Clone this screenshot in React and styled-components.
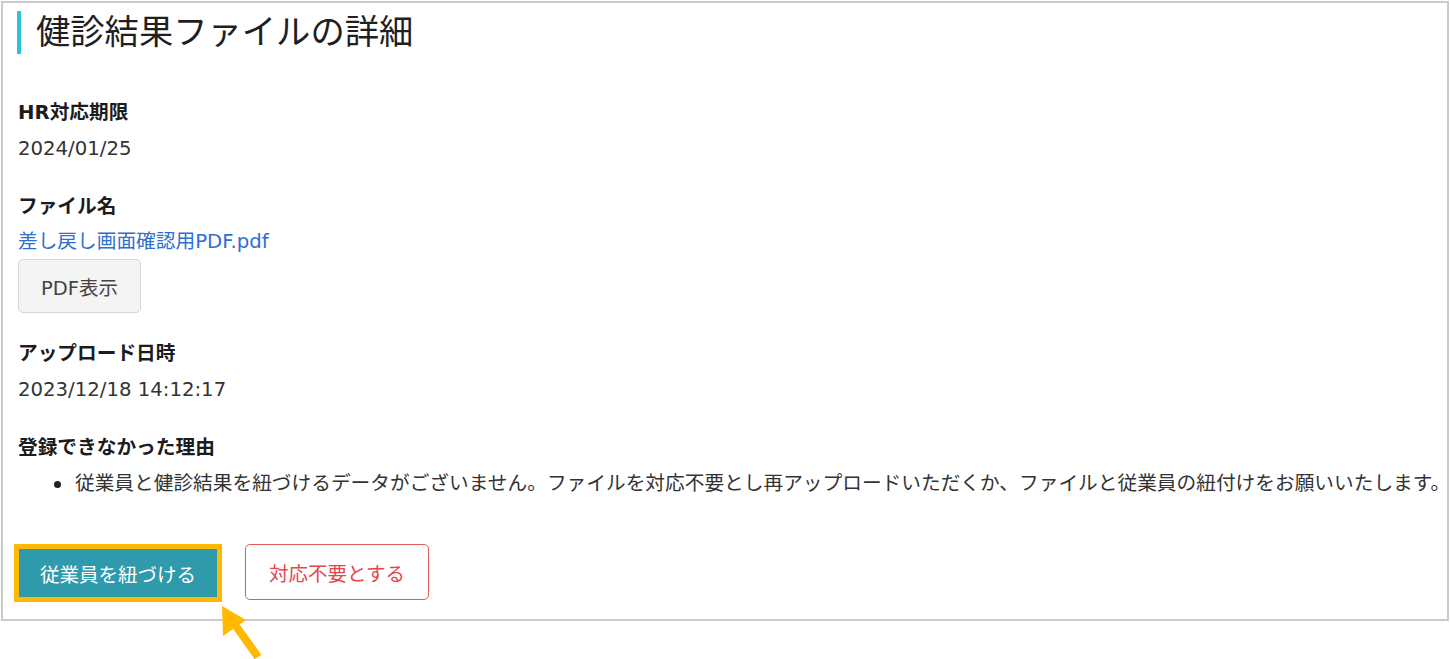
import React from "react";
import styled, { createGlobalStyle } from "styled-components";

const Global = createGlobalStyle`
  html, body { margin: 0; padding: 0; background: #ffffff; }
  html, body, #root { min-height: 100%; height: 100%; }
  body {
    font-family: "DejaVu Sans", "Noto Sans CJK JP", sans-serif;
    color: #333333;
  }
  * { box-sizing: border-box; }
`;

const Page = styled.main`
  min-height: 659px;
  padding: 1px 1px 0 1px;
`;

const Panel = styled.section`
  border: 2px solid #cbcbcb;
  background: #ffffff;
  padding: 0 2px 17px 15px;
  display: flex;
  flex-direction: column;
`;

const Title = styled.h1`
  margin: 8px 0 0 -1px;
  padding: 0 0 6px 15px;
  border-left: 4px solid #2ec1d9;
  font-family: "Noto Sans CJK JP", sans-serif;
  font-weight: 400;
  font-size: 34.3px;
  line-height: 37px;
  color: #1f1f1f;
`;

const Field = styled.div`
  margin-top: ${(p) => p.$top}px;
  display: flex;
  flex-direction: column;
  align-items: flex-start;
`;

const Label = styled.div`
  font-size: 19.7px;
  font-weight: 700;
  line-height: 36px;
  color: #1c1c1c;
`;

const Value = styled.div`
  font-size: 19.7px;
  line-height: 36px;
  color: #333333;
  white-space: nowrap;
`;

const FileLink = styled.a`
  font-size: 19.7px;
  line-height: 34px;
  color: #2f6fd0;
  text-decoration: none;
`;

const GrayButton = styled.button`
  font-family: inherit;
  height: 54px;
  padding: 0 22px;
  font-size: 19.5px;
  color: #444444;
  background: #f4f4f4;
  border: 1px solid #d6d6d6;
  border-radius: 5px;
  cursor: pointer;
`;

const List = styled.ul`
  margin: 0;
  padding: 0 0 0 36px;
  list-style: none;
`;

const Item = styled.li`
  display: flex;
  align-items: center;
  gap: 14px;
  font-size: 19.7px;
  line-height: 36px;
  color: #333333;
  white-space: nowrap;
`;

const Dot = styled.span`
  width: 7px;
  height: 7px;
  border-radius: 50%;
  background: #222222;
  flex: none;
`;

const ButtonRow = styled.div`
  margin: 42px 0 0 -4px;
  display: flex;
  align-items: flex-start;
  gap: 23px;
`;

const Highlight = styled.div`
  position: relative;
  border: 5px solid #ffb900;
  display: flex;
`;

const PrimaryButton = styled.button`
  font-family: inherit;
  width: 198px;
  height: 48px;
  border: none;
  background: #2f9aac;
  color: #ffffff;
  font-size: 19.5px;
  cursor: pointer;
`;

const DangerButton = styled.button`
  font-family: inherit;
  width: 184px;
  height: 56px;
  background: #ffffff;
  border: 1px solid #e05a5c;
  border-radius: 5px;
  color: #e2474b;
  font-size: 19.5px;
  cursor: pointer;
`;

const Arrow = styled.svg`
  position: absolute;
  left: 199px;
  top: 53px;
  z-index: 5;
  overflow: visible;
`;

export default function App() {
  return (
    <>
      <Global />
      <Page>
        <Panel>
          <Title>健診結果ファイルの詳細</Title>

          <Field $top={41}>
            <Label>HR対応期限</Label>
            <Value>2024/01/25</Value>
          </Field>

          <Field $top={22}>
            <Label>ファイル名</Label>
            <FileLink href="#">差し戻し画面確認用PDF.pdf</FileLink>
            <GrayButton>PDF表示</GrayButton>
          </Field>

          <Field $top={23}>
            <Label>アップロード日時</Label>
            <Value>2023/12/18 14:12:17</Value>
          </Field>

          <Field $top={22}>
            <Label>登録できなかった理由</Label>
            <List>
              <Item>
                <Dot />
                従業員と健診結果を紐づけるデータがございません。ファイルを対応不要とし再アップロードいただくか、ファイルと従業員の紐付けをお願いいたします。
              </Item>
            </List>
          </Field>

          <ButtonRow>
            <Highlight>
              <PrimaryButton>従業員を紐づける</PrimaryButton>
              <Arrow width="44" height="58" viewBox="0 0 44 58">
                <line x1="15" y1="20" x2="40" y2="55" stroke="#ffb900" strokeWidth="8" />
                <polygon points="4,4 5,34 28,18" fill="#ffb900" />
              </Arrow>
            </Highlight>
            <DangerButton>対応不要とする</DangerButton>
          </ButtonRow>
        </Panel>
      </Page>
    </>
  );
}
